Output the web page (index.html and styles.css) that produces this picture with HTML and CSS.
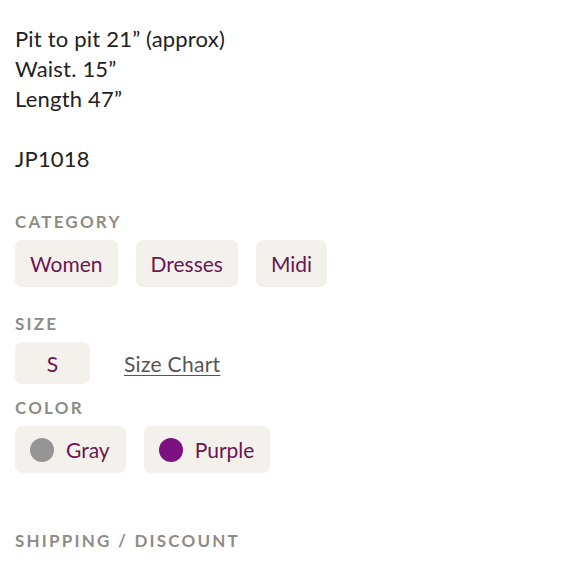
FILE: index.html
```html
<!DOCTYPE html>
<html>
<head>
<meta charset="utf-8">
<link rel="stylesheet" href="styles.css">
</head>
<body>
<div class="page">
  <div class="desc">
    <div>Pit to pit 21” (approx)</div>
    <div>Waist. 15”</div>
    <div>Length 47”</div>
    <div class="blank">&nbsp;</div>
    <div>JP1018</div>
  </div>

  <div class="label cat-label">CATEGORY</div>
  <div class="chips">
    <span class="chip">Women</span>
    <span class="chip">Dresses</span>
    <span class="chip">Midi</span>
  </div>

  <div class="label size-label">SIZE</div>
  <div class="chips size-row">
    <span class="chip size-chip">S</span>
    <a class="size-chart">Size Chart</a>
  </div>

  <div class="label color-label">COLOR</div>
  <div class="chips">
    <span class="chip color-chip"><span class="dot gray"></span>Gray</span>
    <span class="chip color-chip"><span class="dot purple"></span>Purple</span>
  </div>

  <div class="label ship-label">SHIPPING / DISCOUNT</div>
</div>
</body>
</html>
```

FILE: styles.css
```css
* { box-sizing: border-box; }
html, body { margin: 0; padding: 0; background: #fff; }
body { font-family: Lato, "Noto Sans", sans-serif; color: #222; }
.page { padding: 24px 15px 0 15px; }
.desc { font-size: 22px; line-height: 30px; color: #222; letter-spacing: 0.2px; }
.label {
  font-size: 17px;
  font-weight: 700;
  letter-spacing: 2.2px;
  color: #8f8c87;
  line-height: 20px;
}
.cat-label { margin-top: 38px; }
.chips { display: flex; gap: 18px; align-items: center; margin-top: 8px; }
.chip {
  background: #f4f1ed;
  border-radius: 7px;
  color: #6b1650;
  font-size: 21px;
  height: 47px;
  padding: 0 15px;
  display: inline-flex;
  align-items: center;
}
.size-label { margin-top: 27px; }
.size-row { gap: 34px; }
.size-chip { height: 42px; width: 75px; justify-content: center; }
.size-chart { font-size: 21px; color: #555; text-decoration: underline; text-underline-offset: 3px; text-decoration-thickness: 1px; letter-spacing: 0.3px; }
.color-label { margin-top: 14px; }
.color-chip { padding: 0 16px 0 15px; gap: 12px; }
.dot { width: 24px; height: 24px; border-radius: 50%; display: inline-block; }
.dot.gray { background: #959595; }
.dot.purple { background: #7d1080; }
.ship-label { margin-top: 58px; }
```
